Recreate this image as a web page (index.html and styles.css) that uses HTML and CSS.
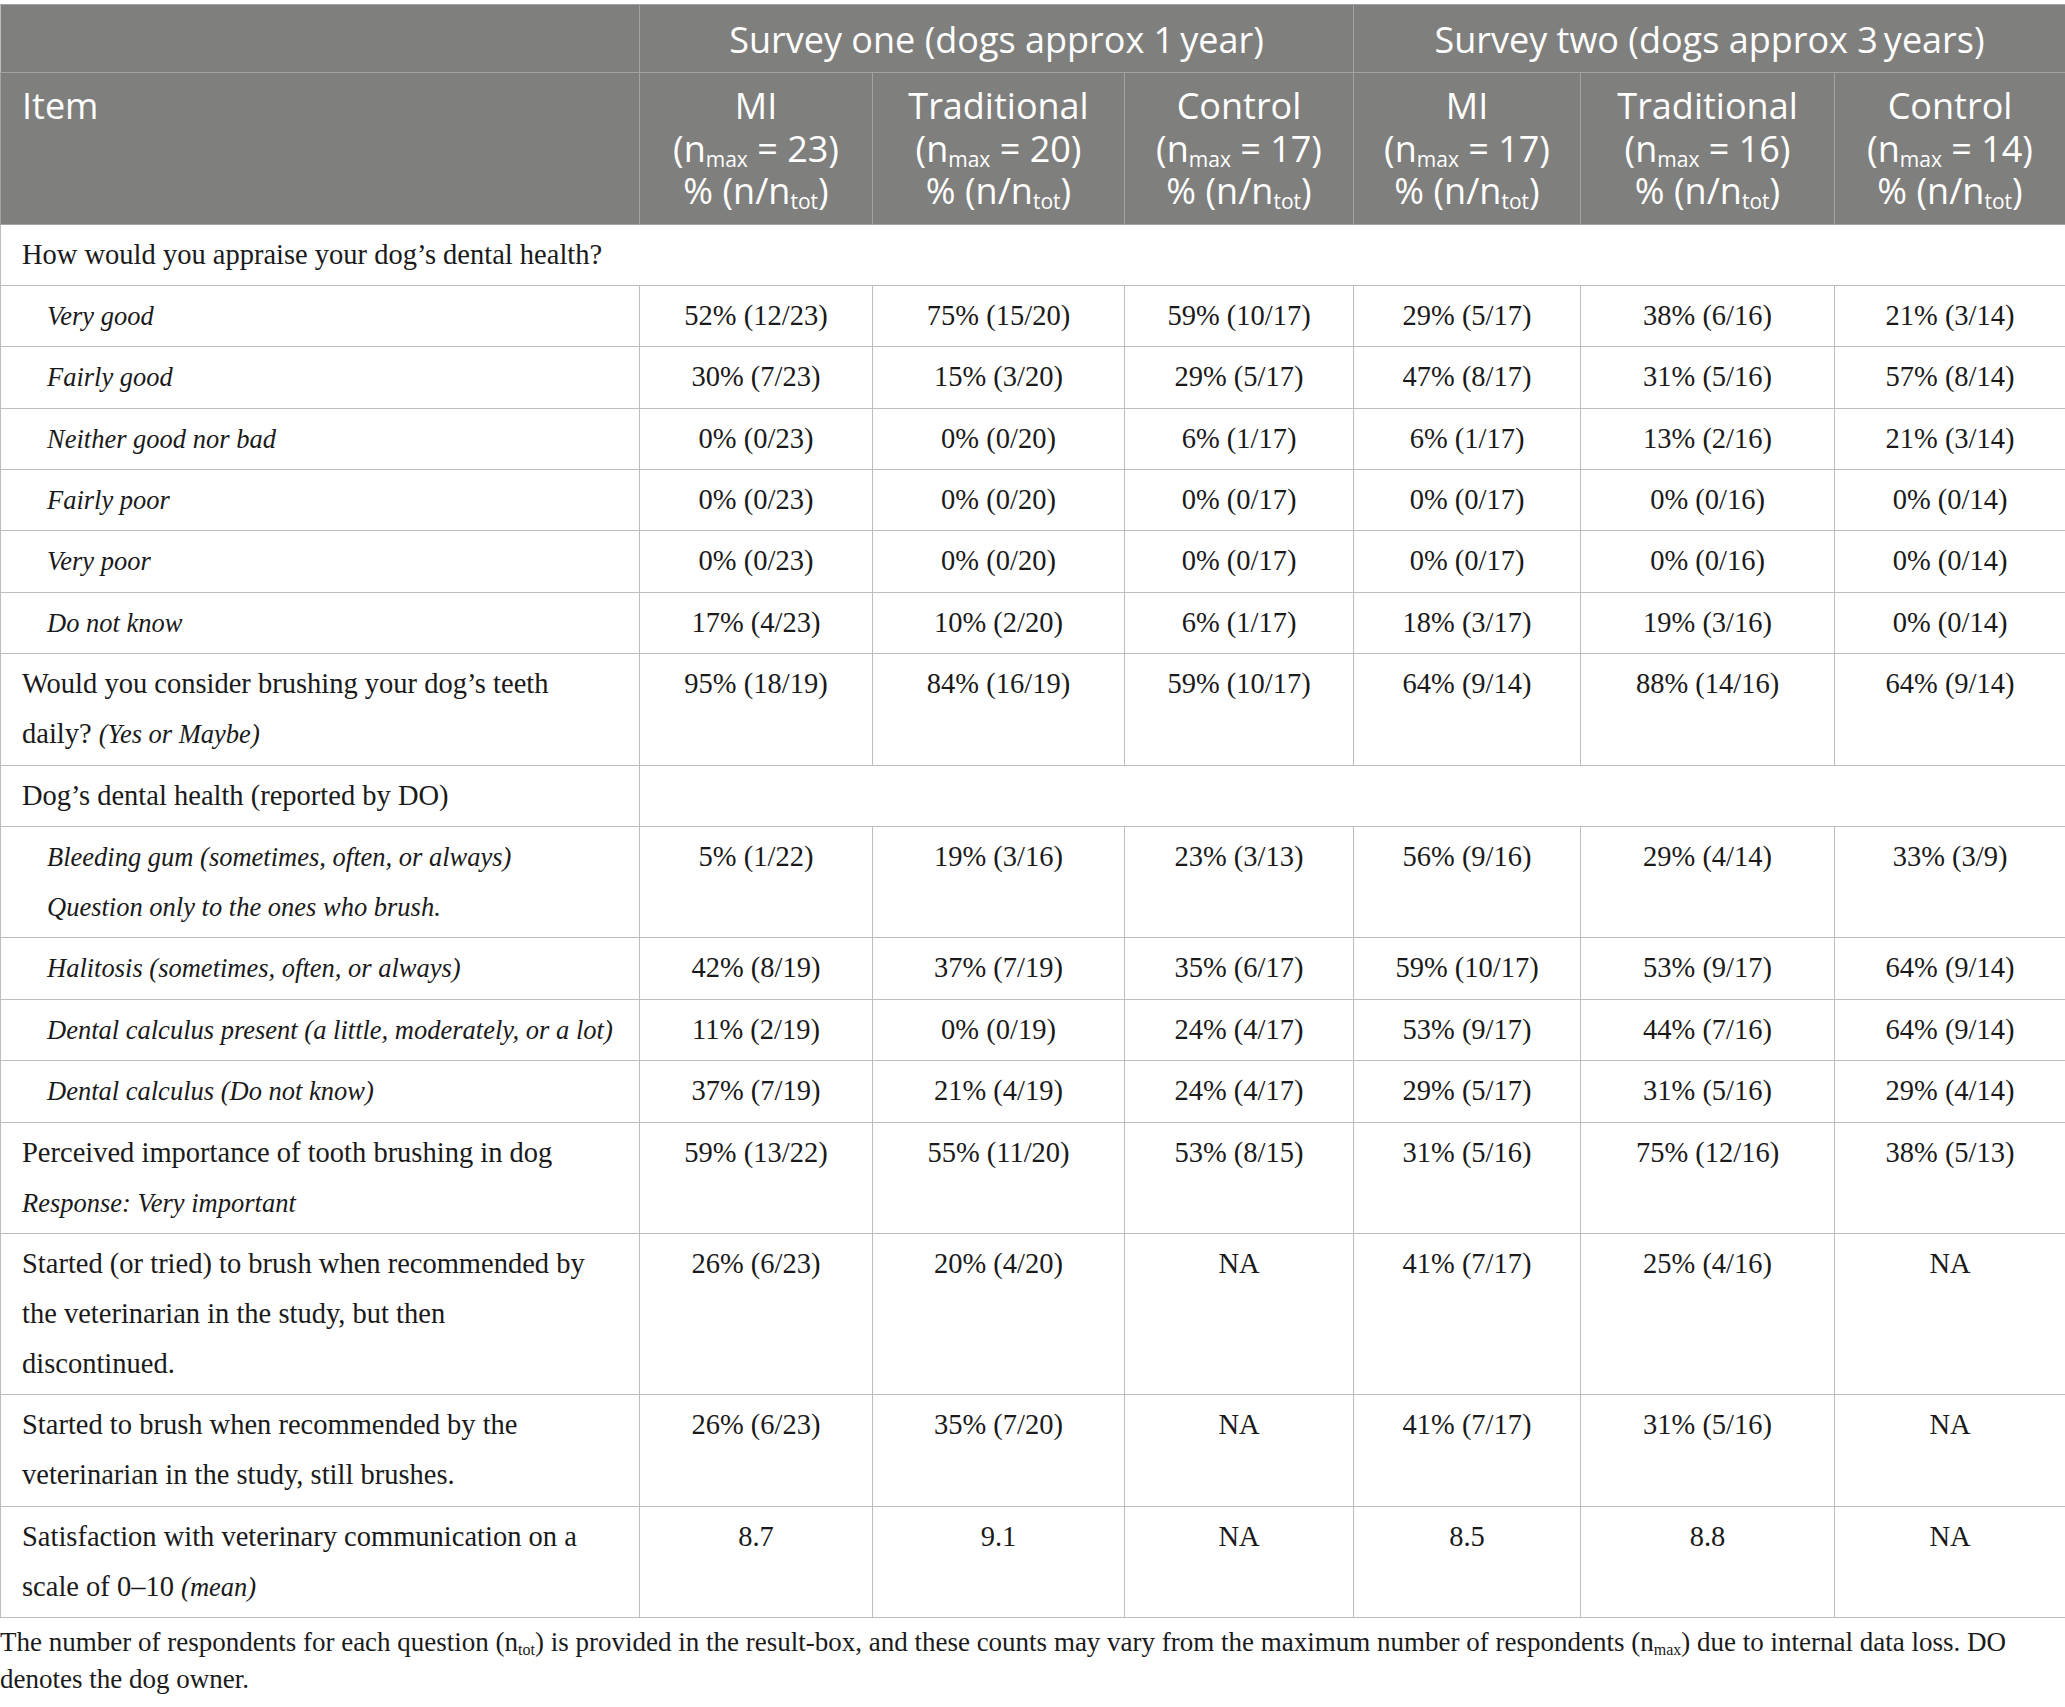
FILE: index.html
```html
<!DOCTYPE html>
<html>
<head>
<meta charset="utf-8">
<link rel="stylesheet" href="styles.css">
</head>
<body>
<div class="page">
<table class="survey">
  <colgroup>
    <col class="c-item"><col class="c-mi"><col class="c-trad"><col class="c-ctrl"><col class="c-mi2"><col class="c-trad2"><col class="c-ctrl2">
  </colgroup>
  <thead>
    <tr class="h1">
      <th></th>
      <th colspan="3">Survey one (dogs approx 1&#8201;year)</th>
      <th colspan="3">Survey two (dogs approx 3&#8201;years)</th>
    </tr>
    <tr class="h2">
      <th class="item">Item</th>
      <th>MI<br>(n<sub>max</sub> = 23)<br>% (n/n<sub>tot</sub>)</th>
      <th>Traditional<br>(n<sub>max</sub> = 20)<br>% (n/n<sub>tot</sub>)</th>
      <th>Control<br>(n<sub>max</sub> = 17)<br>% (n/n<sub>tot</sub>)</th>
      <th>MI<br>(n<sub>max</sub> = 17)<br>% (n/n<sub>tot</sub>)</th>
      <th>Traditional<br>(n<sub>max</sub> = 16)<br>% (n/n<sub>tot</sub>)</th>
      <th>Control<br>(n<sub>max</sub> = 14)<br>% (n/n<sub>tot</sub>)</th>
    </tr>
  </thead>
  <tbody>
    <tr><td class="item" colspan="7">How would you appraise your dog’s dental health?</td></tr>
    <tr><td class="item sub-item">Very good</td><td>52% (12/23)</td><td>75% (15/20)</td><td>59% (10/17)</td><td>29% (5/17)</td><td>38% (6/16)</td><td>21% (3/14)</td></tr>
    <tr><td class="item sub-item">Fairly good</td><td>30% (7/23)</td><td>15% (3/20)</td><td>29% (5/17)</td><td>47% (8/17)</td><td>31% (5/16)</td><td>57% (8/14)</td></tr>
    <tr><td class="item sub-item">Neither good nor bad</td><td>0% (0/23)</td><td>0% (0/20)</td><td>6% (1/17)</td><td>6% (1/17)</td><td>13% (2/16)</td><td>21% (3/14)</td></tr>
    <tr><td class="item sub-item">Fairly poor</td><td>0% (0/23)</td><td>0% (0/20)</td><td>0% (0/17)</td><td>0% (0/17)</td><td>0% (0/16)</td><td>0% (0/14)</td></tr>
    <tr><td class="item sub-item">Very poor</td><td>0% (0/23)</td><td>0% (0/20)</td><td>0% (0/17)</td><td>0% (0/17)</td><td>0% (0/16)</td><td>0% (0/14)</td></tr>
    <tr><td class="item sub-item">Do not know</td><td>17% (4/23)</td><td>10% (2/20)</td><td>6% (1/17)</td><td>18% (3/17)</td><td>19% (3/16)</td><td>0% (0/14)</td></tr>
    <tr><td class="item">Would you consider brushing your dog’s teeth<br>daily? <i>(Yes or Maybe)</i></td><td>95% (18/19)</td><td>84% (16/19)</td><td>59% (10/17)</td><td>64% (9/14)</td><td>88% (14/16)</td><td>64% (9/14)</td></tr>
    <tr><td class="item">Dog’s dental health (reported by DO)</td><td colspan="6"></td></tr>
    <tr><td class="item sub-item">Bleeding gum (sometimes, often, or always)<br>Question only to the ones who brush.</td><td>5% (1/22)</td><td>19% (3/16)</td><td>23% (3/13)</td><td>56% (9/16)</td><td>29% (4/14)</td><td>33% (3/9)</td></tr>
    <tr><td class="item sub-item">Halitosis (sometimes, often, or always)</td><td>42% (8/19)</td><td>37% (7/19)</td><td>35% (6/17)</td><td>59% (10/17)</td><td>53% (9/17)</td><td>64% (9/14)</td></tr>
    <tr><td class="item sub-item">Dental calculus present (a little, moderately, or a lot)</td><td>11% (2/19)</td><td>0% (0/19)</td><td>24% (4/17)</td><td>53% (9/17)</td><td>44% (7/16)</td><td>64% (9/14)</td></tr>
    <tr><td class="item sub-item">Dental calculus (Do not know)</td><td>37% (7/19)</td><td>21% (4/19)</td><td>24% (4/17)</td><td>29% (5/17)</td><td>31% (5/16)</td><td>29% (4/14)</td></tr>
    <tr><td class="item">Perceived importance of tooth brushing in dog<br><i>Response: Very important</i></td><td>59% (13/22)</td><td>55% (11/20)</td><td>53% (8/15)</td><td>31% (5/16)</td><td>75% (12/16)</td><td>38% (5/13)</td></tr>
    <tr><td class="item">Started (or tried) to brush when recommended by<br>the veterinarian in the study, but then<br>discontinued.</td><td>26% (6/23)</td><td>20% (4/20)</td><td>NA</td><td>41% (7/17)</td><td>25% (4/16)</td><td>NA</td></tr>
    <tr><td class="item">Started to brush when recommended by the<br>veterinarian in the study, still brushes.</td><td>26% (6/23)</td><td>35% (7/20)</td><td>NA</td><td>41% (7/17)</td><td>31% (5/16)</td><td>NA</td></tr>
    <tr><td class="item">Satisfaction with veterinary communication on a<br>scale of 0–10 <i>(mean)</i></td><td>8.7</td><td>9.1</td><td>NA</td><td>8.5</td><td>8.8</td><td>NA</td></tr>
  </tbody>
</table>
<p class="note">The number of respondents for each question (n<sub>tot</sub>) is provided in the result-box, and these counts may vary from the maximum number of respondents (n<sub>max</sub>) due to internal data loss. DO<br>denotes the dog owner.</p>
</div>
</body>
</html>
```

FILE: styles.css
```css
html, body {
  margin: 0;
  padding: 0;
  background: #ffffff;
}

.page {
  padding-top: 4px;
  width: 2065px;
}

.survey {
  width: 2065px;
  border-collapse: collapse;
  table-layout: fixed;
  font-family: "Liberation Serif", "Times New Roman", serif;
  font-size: 28.5px;
  color: #1a1a1a;
}

.c-item { width: 639px; }
.c-mi { width: 233px; }
.c-trad { width: 252px; }
.c-ctrl { width: 229px; }
.c-mi2 { width: 227px; }
.c-trad2 { width: 254px; }
.c-ctrl2 { width: 231px; }

.survey thead th {
  background: #7f807e;
  color: #ffffff;
  font-family: "Open Sans", "Noto Sans", sans-serif;
  font-weight: 400;
  font-size: 36px;
  border: 1px solid #a3a4a2;
  text-align: center;
}

.survey thead tr.h1 th {
  height: 64px;
  padding: 3px 10px 0;
  vertical-align: middle;
  line-height: 42px;
}

.survey thead tr.h2 th {
  padding: 12px 6px 11px;
  line-height: 42.5px;
  vertical-align: top;
}

.survey thead tr.h2 th.item {
  text-align: left;
  padding-left: 21px;
}

.survey thead sub {
  font-size: 21px;
  line-height: 0;
  vertical-align: -5px;
}

.survey thead tr.h1 th:first-child {
  border-left-color: #bdbdbd;
}

.survey tbody td {
  border: 1px solid #bdbdbd;
  padding: 5px 6px 5.4px;
  line-height: 50px;
  vertical-align: top;
  text-align: center;
  white-space: nowrap;
}

.survey tbody td.item {
  text-align: left;
  padding-left: 21px;
}

.survey tbody td.sub-item {
  padding-left: 46px;
  font-style: italic;
  font-size: 26.5px;
}

.survey tbody td i {
  font-size: 26.5px;
}

.note {
  margin: 6px 0 0;
  font-family: "Liberation Serif", "Times New Roman", serif;
  font-size: 27px;
  line-height: 37px;
  color: #1a1a1a;
}

.note sub {
  font-size: 16px;
  line-height: 0;
  vertical-align: -4px;
}
```
